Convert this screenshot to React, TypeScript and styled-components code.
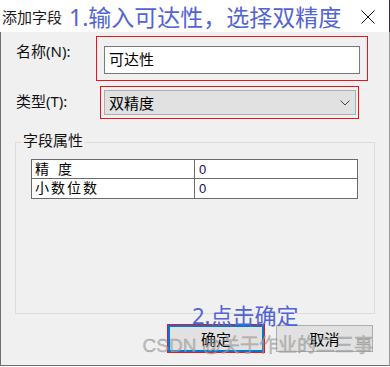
import styled, { createGlobalStyle } from "styled-components";

const GlobalStyle = createGlobalStyle`
  html, body {
    margin: 0;
    padding: 0;
    background: #ffffff;
  }
`;

const ui = `"Noto Sans", "Noto Sans CJK SC", sans-serif`;

function App() {
  return (
    <>
      <GlobalStyle />
      <StWindow>
        <StTitleBar>
          <StTitle>添加字段</StTitle>
          <StNote>1.输入可达性，选择双精度</StNote>
          <StClose width="14" height="14" viewBox="0 0 14 14">
            <path d="M0.5 0.5 L13.5 13.5 M13.5 0.5 L0.5 13.5" stroke="#111" strokeWidth="1" fill="none" />
          </StClose>
        </StTitleBar>
        <StBody>
          <StRow $top={4}>
            <StLabel>名称(N):</StLabel>
            <StMark $w={272} $h={45} $pad="9px 7px 6px 7px">
              <StInput>可达性</StInput>
            </StMark>
          </StRow>
          <StRow $top={5}>
            <StLabel>类型(T):</StLabel>
            <StMark $w={259} $h={33} $pad="3px 2px 3px 3px" $shift={4}>
              <StSelect>
                双精度
                <svg width="10" height="6" viewBox="0 0 10 6">
                  <path d="M0.5 0.5 L5 5 L9.5 0.5" stroke="#444" strokeWidth="1" fill="none" />
                </svg>
              </StSelect>
            </StMark>
          </StRow>
          <StGroup>
            <StLegend>字段属性</StLegend>
            <StGrid>
              <StCell $spread={9}>精度</StCell>
              <StValue>0</StValue>
              <StCell $spread={2}>小数位数</StCell>
              <StValue>0</StValue>
            </StGrid>
          </StGroup>
          <StButtons>
            <StMark $w={98} $h={29} $pad="0">
              <StButton $primary>确定</StButton>
            </StMark>
            <StButton>取消</StButton>
          </StButtons>
        </StBody>
        <StNoteTwo>2.点击确定</StNoteTwo>
        <StWatermark>CSDN @关于作业的二三事</StWatermark>
      </StWindow>
    </>
  );
}

export default App;

const StWindow = styled.div`
  position: relative;
  width: 390px;
  height: 366px;
  display: flex;
  flex-direction: column;
  font-family: ${ui};
  color: #000;
`;

const StTitleBar = styled.div`
  height: 32px;
  flex: none;
  display: flex;
  align-items: center;
  background: #ffffff;
  border-right: 1px solid #3a2b48;
  padding-left: 2px;
`;

const StTitle = styled.span`
  font-size: 15px;
  color: #1a1a1a;
`;

const StNote = styled.span`
  margin-left: 7px;
  font-size: 23px;
  line-height: 1;
  color: #5263d6;
  margin-top: 2px;
`;

const StClose = styled.svg`
  margin-left: auto;
  margin-right: 14px;
  margin-top: 1px;
`;

const StBody = styled.div`
  flex: 1;
  display: flex;
  flex-direction: column;
  background: #f0f0f0;
  border-left: 1px solid #6e6e6e;
  border-right: 1px solid #9a9a9a;
  border-bottom: 1px solid #6e6e6e;
  padding-left: 14px;
`;

const StRow = styled.div<{ $top: number }>`
  display: flex;
  align-items: flex-start;
  margin-top: ${(p) => p.$top}px;
`;

const StLabel = styled.div`
  width: 80px;
  flex: none;
  padding-left: 1px;
  margin-top: 6px;
  font-size: 15px;
  line-height: 18px;
  color: #111;
`;

const StMark = styled.div<{ $w: number; $h: number; $pad: string; $shift?: number }>`
  box-sizing: border-box;
  width: ${(p) => p.$w}px;
  height: ${(p) => p.$h}px;
  padding: ${(p) => p.$pad};
  margin-left: ${(p) => p.$shift ?? 0}px;
  border: 1px solid #e8141e;
  flex: none;
`;

const StInput = styled.div`
  box-sizing: border-box;
  width: 256px;
  height: 28px;
  border: 1px solid #7a7a7a;
  background: #ffffff;
  padding-left: 4px;
  font-size: 15px;
  line-height: 25px;
`;

const StSelect = styled.div`
  box-sizing: border-box;
  width: 252px;
  height: 25px;
  border: 1px solid #adadad;
  background: #e1e1e1;
  padding: 0 5px 0 4px;
  display: flex;
  align-items: center;
  justify-content: space-between;
  font-size: 15px;
  line-height: 22px;
`;

const StGroup = styled.div`
  position: relative;
  box-sizing: border-box;
  width: 360px;
  height: 172px;
  margin-top: 23px;
  border: 1px solid #dcdcdc;
  padding: 16px 0 0 15px;
`;

const StLegend = styled.span`
  position: absolute;
  left: 5px;
  top: -12px;
  padding: 0 2px;
  background: #f0f0f0;
  font-size: 15px;
  line-height: 18px;
  color: #111;
`;

const StGrid = styled.div`
  width: 327px;
  box-sizing: border-box;
  display: grid;
  grid-template-columns: 162px 1fr;
  grid-template-rows: 18px 19px;
  gap: 1px;
  padding: 1px;
  background: #6b6b6b;
`;

const StCell = styled.div<{ $spread: number }>`
  background: #ffffff;
  padding-left: 3px;
  font-size: 14px;
  line-height: 18px;
  letter-spacing: ${(p) => p.$spread}px;
  white-space: nowrap;
`;

const StValue = styled.div`
  background: #ffffff;
  padding-left: 4px;
  font-family: "Liberation Sans", sans-serif;
  font-size: 13px;
  line-height: 19px;
  color: #10104a;
`;

const StButtons = styled.div`
  display: flex;
  justify-content: flex-end;
  align-items: center;
  gap: 11px;
  margin-top: 10px;
  padding-right: 16px;
`;

const StButton = styled.div<{ $primary?: boolean }>`
  box-sizing: border-box;
  width: ${(p) => (p.$primary ? 96 : 97)}px;
  height: 27px;
  background: #e1e1e1;
  border: ${(p) => (p.$primary ? "2px solid #0078d7" : "1px solid #adadad")};
  display: flex;
  align-items: center;
  justify-content: center;
  font-size: 15px;
`;

const StNoteTwo = styled.div`
  position: absolute;
  left: 192px;
  top: 304px;
  font-size: 22px;
  line-height: 1;
  color: #5263d6;
`;

const StWatermark = styled.div`
  position: absolute;
  right: 17px;
  top: 336px;
  font-family: "Liberation Sans", "Noto Sans CJK SC", sans-serif;
  font-size: 19px;
  line-height: 1;
  white-space: nowrap;
  color: rgba(170, 170, 170, 0.7);
  -webkit-text-stroke: 0.4px rgba(110, 110, 110, 0.55);
`;
